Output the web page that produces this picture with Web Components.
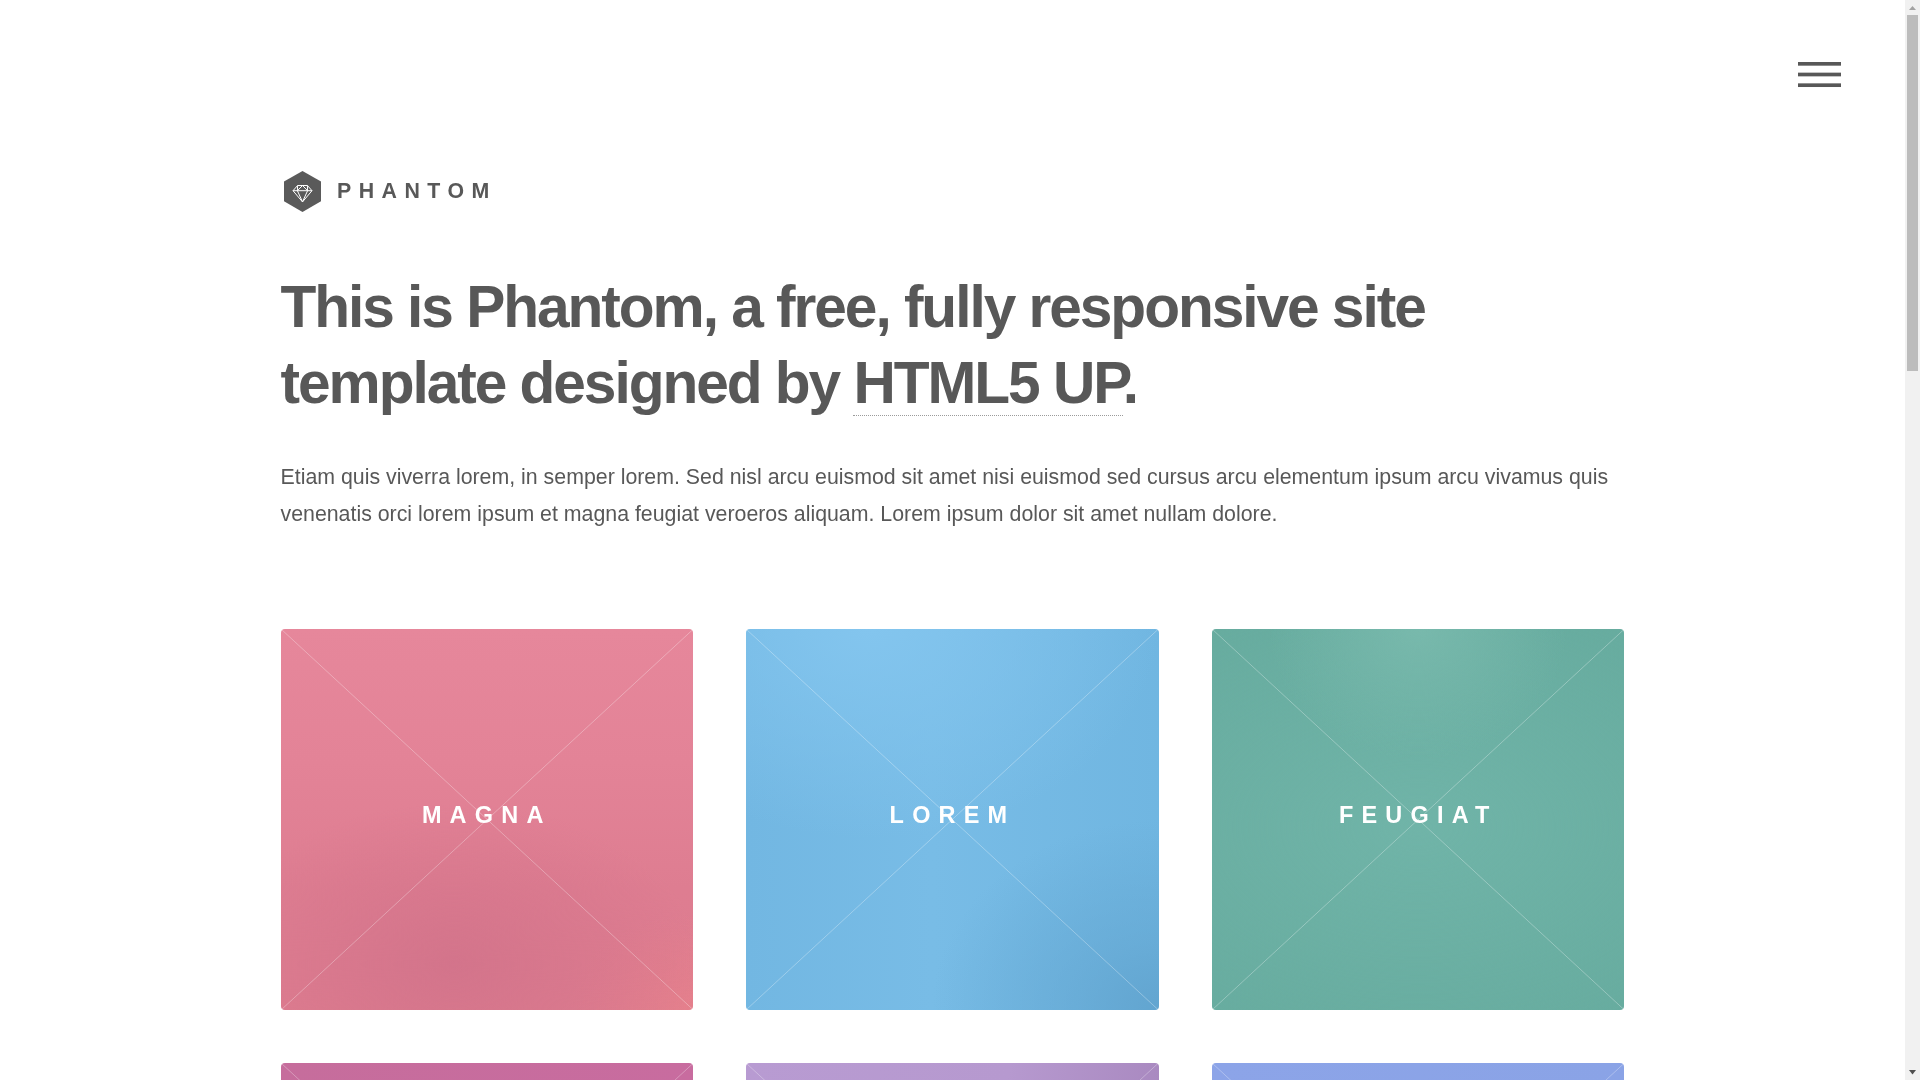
<!DOCTYPE html>
<html lang="en">
<head>
<meta charset="utf-8">
<title>Phantom</title>
<style>
  html { font-size: 21.3333px; scrollbar-width: none; }
  body {
    margin: 0;
    background: #fff;
    color: #585858;
    font: 400 21.3333px/1.75 "Liberation Sans", Arial, sans-serif;
  }
</style>
</head>
<body>
<ph-menu-toggle></ph-menu-toggle>
<ph-scrollbar></ph-scrollbar>
<ph-page>
  <ph-logo slot="header">PHANTOM</ph-logo>
  <ph-intro>
    <span slot="title">This is Phantom, a free, fully responsive site template designed by <ph-link href="#">HTML5 UP</ph-link>.</span>
    Etiam quis viverra lorem, in semper lorem. Sed nisl arcu euismod sit amet nisi euismod sed cursus arcu elementum ipsum arcu vivamus quis venenatis orci lorem ipsum et magna feugiat veroeros aliquam. Lorem ipsum dolor sit amet nullam dolore.
  </ph-intro>
  <ph-tiles>
    <ph-tile tone="pink">Magna</ph-tile>
    <ph-tile tone="blue">Lorem</ph-tile>
    <ph-tile tone="green">Feugiat</ph-tile>
    <ph-tile tone="magenta">Tempus</ph-tile>
    <ph-tile tone="purple">Aliquam</ph-tile>
    <ph-tile tone="periwinkle">Veroeros</ph-tile>
  </ph-tiles>
</ph-page>

<script>
const tones = {
  pink: `radial-gradient(ellipse 60% 42% at 42% 88%, #d3748b 0%, rgba(211,116,139,0) 100%),
         radial-gradient(ellipse 30% 25% at 100% 100%, #e5808c 0%, rgba(229,128,140,0) 100%),
         linear-gradient(180deg, #e6879b 0%, #e38397 35%, #de7d91 68%, #de7c8f 100%)`,
  blue: `radial-gradient(ellipse 55% 50% at 100% 100%, #62a5d0 0%, rgba(98,165,208,.6) 35%, rgba(98,165,208,0) 100%),
         radial-gradient(ellipse 70% 55% at 30% 0%, #83c5ee 0%, rgba(131,197,238,0) 100%),
         linear-gradient(90deg, #72b7e2 0%, #78bce6 45%, #70b6e1 100%)`,
  green: `radial-gradient(ellipse 36% 34% at 50% 0%, #78b9ac 0%, rgba(120,185,172,0) 100%),
          radial-gradient(ellipse 110% 75% at 50% 52%, #70b4a8 0%, rgba(112,180,168,0) 100%),
          linear-gradient(#65aa9d, #65aa9d)`,
  magenta: `linear-gradient(90deg, #c66d9c, #c86c9f)`,
  purple: `linear-gradient(100deg, #b89bd2 0%, #b699cf 55%, #a483ba 100%)`,
  periwinkle: `linear-gradient(90deg, #8ca4e8, #8aa3e6)`,
};

class PhMenuToggle extends HTMLElement {
  constructor() {
    super();
    this.attachShadow({ mode: "open" }).innerHTML = `
      <style>
        :host { position: fixed; top: 61px; right: 79px; display: block; width: 43px; height: 27px; }
        svg { display: block; }
      </style>
      <svg width="43" height="27" viewBox="0 0 43 27" aria-label="Menu">
        <rect x="0" y="1" width="43" height="3.67" fill="#585858"/>
        <rect x="0" y="11.65" width="43" height="3.7" fill="#585858"/>
        <rect x="0" y="22.35" width="43" height="3.67" fill="#585858"/>
      </svg>`;
  }
}

// the capture hides the real scrollbar, so it is drawn over the page's right edge
class PhScrollbar extends HTMLElement {
  constructor() {
    super();
    this.attachShadow({ mode: "open" }).innerHTML = `
      <style>
        :host {
          position: fixed; top: 0; right: 0; bottom: 0; width: 15px; background: #f1f1f1;
          display: flex; flex-direction: column; align-items: center;
        }
        svg { display: block; flex: none; }
        .track { flex: 1; width: 100%; display: flex; justify-content: center; }
        .thumb { width: 11px; height: 356px; background: #bcbcbc; }
      </style>
      <svg width="15" height="15" viewBox="0 0 15 15"><path d="M4 10 7.5 6 11 10z" fill="#a3a3a3"/></svg>
      <div class="track"><div class="thumb"></div></div>
      <svg width="15" height="15" viewBox="0 0 15 15"><path d="M4 5h7L7.5 9.5z" fill="#505050"/></svg>`;
  }
}

class PhPage extends HTMLElement {
  constructor() {
    super();
    // own layer: the reference's text is greyscale antialiased
    this.attachShadow({ mode: "open" }).innerHTML = `
      <style>
        :host { display: block; width: calc(100% - 15px); padding-bottom: 100px; will-change: opacity; }
        .inner { box-sizing: border-box; max-width: 68em; margin: 0 auto; padding: 0 2.5em; }
        header { padding-top: 169px; }
      </style>
      <div class="inner">
        <header><slot name="header"></slot></header>
        <slot></slot>
      </div>`;
  }
}

class PhLogo extends HTMLElement {
  constructor() {
    super();
    this.attachShadow({ mode: "open" }).innerHTML = `
      <style>
        :host { display: flex; align-items: center; gap: 12.5px; height: 44px; }
        svg { flex: none; display: block; }
        span { font-weight: 700; letter-spacing: .35em; line-height: 1; position: relative; top: 1px; }
      </style>
      <svg width="44" height="44" viewBox="0 0 44 44" aria-hidden="true">
        <path d="M21.5 2 40 12.6v19.6L21.5 43 3 32.2V12.6z" fill="#5a5a5a"/>
        <g fill="none" stroke="#fff" stroke-width="1" stroke-linejoin="round">
          <path d="M16.6 16.5h9.8l4.6 5.2-9.5 11.2L12 21.7z"/>
          <path d="M12 21.7h19M16.6 16.5l-.2 5.2 5.1 11.2 5.1-11.2-.2-5.2M16.4 21.7l5.1-5.2 5.1 5.2"/>
        </g>
      </svg>
      <span><slot></slot></span>`;
  }
}

class PhLink extends HTMLElement {
  constructor() {
    super();
    this.attachShadow({ mode: "open" }).innerHTML = `
      <style>
        :host { display: inline; }
        a { color: inherit; text-decoration: none; border-bottom: dotted 1px rgba(88,88,88,.6); }
      </style>
      <a href="${this.getAttribute("href") || "#"}"><slot></slot></a>`;
  }
}

class PhIntro extends HTMLElement {
  constructor() {
    super();
    this.attachShadow({ mode: "open" }).innerHTML = `
      <style>
        :host { display: block; }
        h1 { margin: 56px 0 0; font-size: 2.75em; font-weight: 700; line-height: 1.3; letter-spacing: -.035em; }
        p { margin: 37.4px 0 0; }
      </style>
      <h1><slot name="title"></slot></h1>
      <p><slot></slot></p>`;
  }
}

class PhTiles extends HTMLElement {
  constructor() {
    super();
    this.attachShadow({ mode: "open" }).innerHTML = `
      <style>
        :host { display: grid; grid-template-columns: repeat(3, 1fr); gap: 2.5em; margin-top: 95.4px; }
      </style>
      <slot></slot>`;
  }
}

class PhTile extends HTMLElement {
  constructor() {
    super();
    const bg = tones[this.getAttribute("tone")] || tones.pink;
    this.attachShadow({ mode: "open" }).innerHTML = `
      <style>
        :host { display: block; position: relative; height: 381px; border-radius: 4px; overflow: hidden; background: ${bg}; }
        svg { position: absolute; inset: 0; width: 100%; height: 100%; }
        line { stroke: rgba(255,255,255,.3); stroke-width: 1; vector-effect: non-scaling-stroke; }
        .label {
          position: relative; box-sizing: border-box; height: 100%; padding-bottom: 8px;
          display: flex; align-items: center; justify-content: center;
          color: #fff; font-size: 1.1em; font-weight: 700; letter-spacing: .35em; text-transform: uppercase;
        }
      </style>
      <svg viewBox="0 0 100 100" preserveAspectRatio="none" aria-hidden="true">
        <line x1="0" y1="0" x2="100" y2="100"/>
        <line x1="100" y1="0" x2="0" y2="100"/>
      </svg>
      <div class="label"><slot></slot></div>`;
  }
}

customElements.define("ph-menu-toggle", PhMenuToggle);
customElements.define("ph-scrollbar", PhScrollbar);
customElements.define("ph-page", PhPage);
customElements.define("ph-logo", PhLogo);
customElements.define("ph-link", PhLink);
customElements.define("ph-intro", PhIntro);
customElements.define("ph-tiles", PhTiles);
customElements.define("ph-tile", PhTile);
</script>
</body>
</html>
